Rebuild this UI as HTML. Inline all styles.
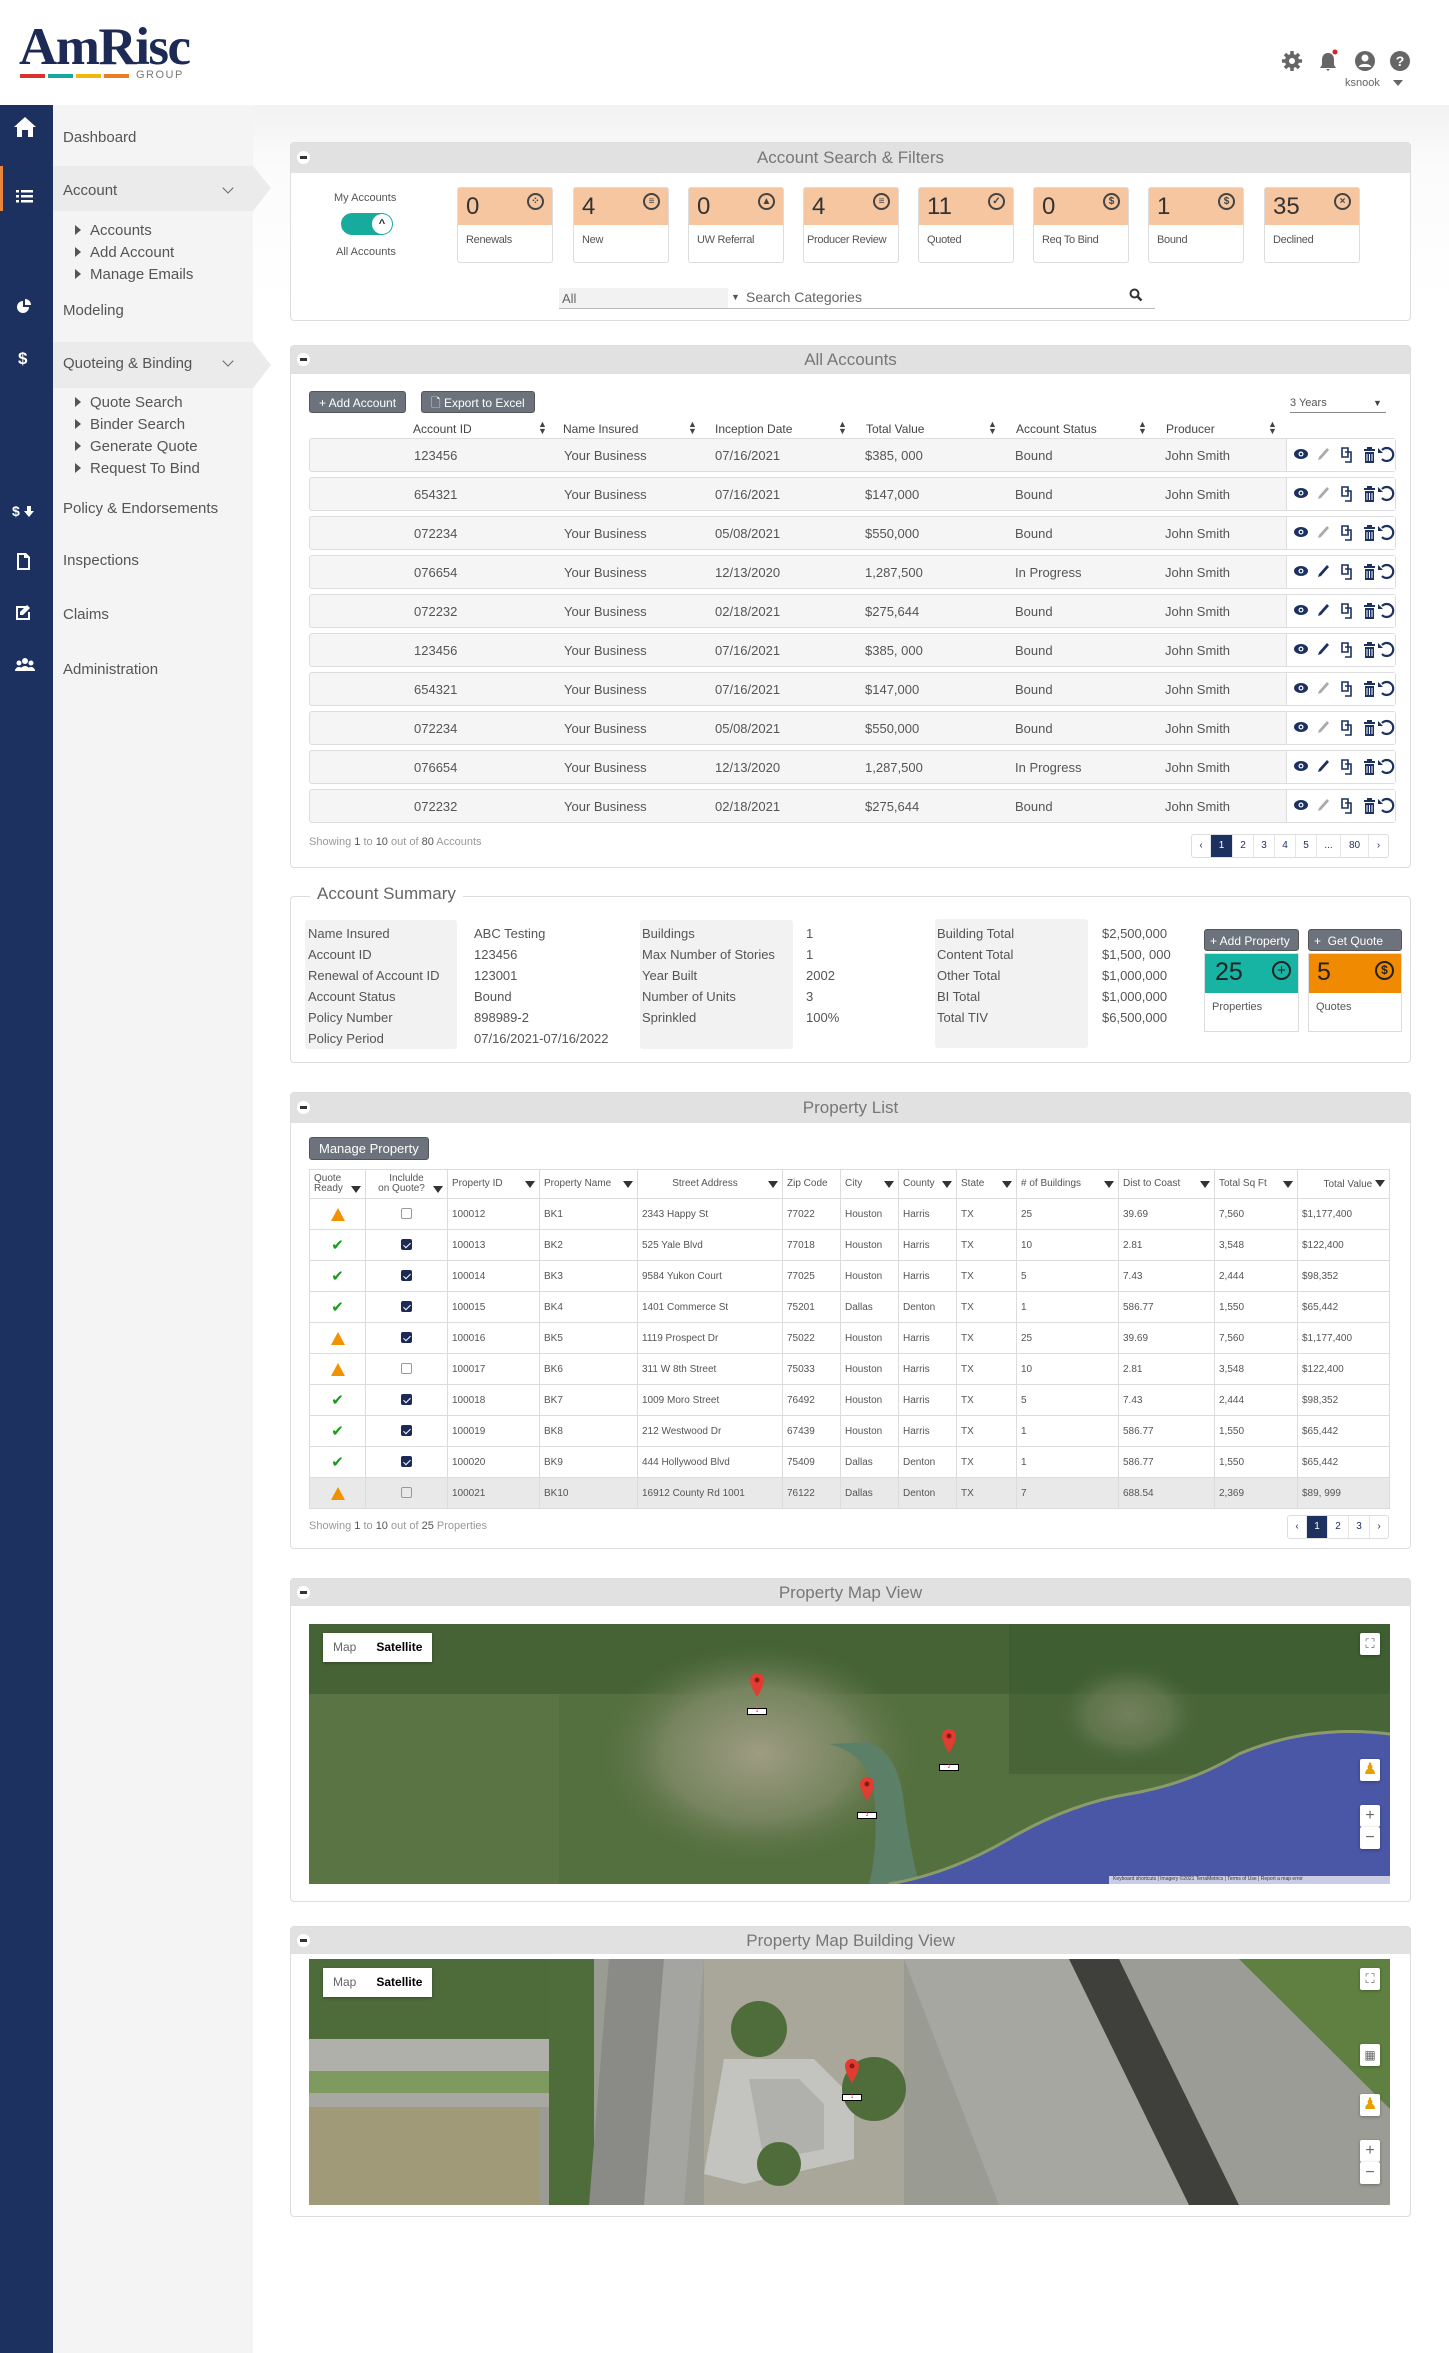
<!DOCTYPE html>
<html><head><meta charset="utf-8">
<style>
*{box-sizing:border-box;margin:0;padding:0}
body{width:1449px;height:2353px;position:relative;background:#fff;font-family:"Liberation Sans",sans-serif;color:#555;overflow:hidden}
.a{position:absolute}
.nav{position:absolute;left:63px;font-size:15px;color:#555}
.sub{position:absolute;left:75px;font-size:15px;color:#555}
.sub:before{content:"";display:inline-block;border-left:6px solid #555;border-top:5px solid transparent;border-bottom:5px solid transparent;margin-right:9px;vertical-align:0}
.panel{position:absolute;left:290px;width:1121px;border:1px solid #ddd;border-radius:4px;background:#fff}
.ph{position:absolute;left:0;top:0;width:100%;background:#e1e1e1;text-align:center;color:#777;font-size:17px}
.min{position:absolute;left:6px;width:13px;height:13px;border-radius:50%;background:#fff}
.min:after{content:"";position:absolute;left:3px;top:5px;width:7px;height:3px;background:#333}
.card{position:absolute;top:187px;width:96px;height:76px;border:1px solid #ddd;border-radius:3px;background:#fff}
.card .t{height:37px;background:#f6c6a0;position:relative}
.card .n{position:absolute;left:8px;top:5px;font-size:24px;color:#333}
.card .i{position:absolute;right:8px;top:5px;width:17px;height:17px;border:2px solid #444;border-radius:50%;font-size:10px;line-height:13px;text-align:center;color:#444;font-weight:bold}
.card .l{font-size:11px;padding:9px 0 0 8px;color:#555;white-space:nowrap;letter-spacing:-0.3px}
.btn{position:absolute;background:#6c737c;color:#fff;font-size:12px;border-radius:3px;height:22px;line-height:22px;padding:0 9px;border:1px solid #555}
.hd{position:absolute;top:422px;font-size:12px;color:#444}
.so{position:absolute;top:421px;font-size:9px;line-height:7px;color:#444}
.row{position:absolute;left:309px;width:1087px;height:34px;background:#f5f5f5;border:1px solid #ddd;border-radius:3px;font-size:13px;color:#555}
.row span{position:absolute;top:9px}
.row .ic{position:absolute;left:976px;top:0;width:109px;height:32px;background:#fff;border-left:1px solid #ddd}
.pg{position:absolute;height:24px;border:1px solid #ddd;border-radius:3px;background:#fff;font-size:10px;color:#1c3160;display:flex}
.pg div{flex:none;text-align:center;line-height:22px;border-right:1px solid #e6e6e6}
.pg .on{background:#1c3160;color:#fff}
.sl{position:absolute;font-size:13px;color:#555}
.tb{position:absolute;left:309px;top:1169px;width:1081px;border:1px solid #ccc;border-collapse:collapse;font-size:10px;color:#555}
.tb td,.tb th{border:1px solid #dcdcdc;height:31px;padding:0 4px;font-weight:normal;text-align:left;white-space:nowrap}
.tb th{height:29px;font-size:10px;line-height:10px;color:#555}
.tb th i{display:inline-block;float:right;width:0;height:0;border-left:5px solid transparent;border-right:5px solid transparent;border-top:7px solid #333;margin-top:2px;position:relative}
.cb{display:inline-block;width:11px;height:11px;border:1px solid #999;border-radius:2px;vertical-align:middle}
.cb.k{background:#1c2a55;border-color:#1c2a55;position:relative}
.cb.k:after{content:"";position:absolute;left:3px;top:1px;width:3px;height:6px;border:solid #fff;border-width:0 1.5px 1.5px 0;transform:rotate(45deg)}
.ck{color:#1a9a1a;font-size:15px;font-weight:bold}
.wn{display:inline-block;width:0;height:0;border-left:7px solid transparent;border-right:7px solid transparent;border-bottom:13px solid #f39200;position:relative;vertical-align:middle}
.mt{position:absolute;left:14px;top:9px;height:29px;background:#fff;display:flex;font-size:12px;box-shadow:0 1px 3px rgba(0,0,0,.3)}
.mt div{padding:0 10px;line-height:29px}
.mc{position:absolute;width:20px;height:22px;background:#fff;border-radius:2px;box-shadow:0 1px 3px rgba(0,0,0,.3);text-align:center;font-size:16px;line-height:22px;color:#666}
.pin{position:absolute;width:16px;height:24px}
.lb{position:absolute;width:20px;height:7px;background:#fff;border:1px solid #000;font-size:5px;line-height:5px;text-align:center;color:red}
</style></head><body>

<!-- header -->
<div class="a" style="left:0;top:0;width:1449px;height:105px;background:#fff;box-shadow:0 2px 4px rgba(0,0,0,.08)"></div>
<div class="a" style="left:19px;top:20px;font-family:'Liberation Serif',serif;font-weight:bold;font-size:53px;color:#1c2a55;letter-spacing:-1.5px;line-height:54px">AmRisc</div>
<div class="a" style="left:20px;top:74px;width:25px;height:4px;background:#d9332b"></div>
<div class="a" style="left:48px;top:74px;width:25px;height:4px;background:#17a9a0"></div>
<div class="a" style="left:76px;top:74px;width:25px;height:4px;background:#f2b70f"></div>
<div class="a" style="left:104px;top:74px;width:25px;height:4px;background:#ec7e22"></div>
<div class="a" style="left:136px;top:69px;font-size:11px;color:#777;letter-spacing:1.5px">GROUP</div>
<svg class="a" style="left:1280px;top:49px" width="130" height="24" viewBox="0 0 130 24">
<g fill="#666">
<circle cx="12" cy="12" r="7"/><g stroke="#666" stroke-width="3.5"><line x1="12" y1="2" x2="12" y2="22"/><line x1="2" y1="12" x2="22" y2="12"/><line x1="5" y1="5" x2="19" y2="19"/><line x1="19" y1="5" x2="5" y2="19"/></g><circle cx="12" cy="12" r="3" fill="#fff"/>
<path d="M48 4c4 0 6 3 6 7v5l2 3H40l2-3v-5c0-4 2-7 6-7zM46 20h4l-2 2z"/>
<circle cx="85" cy="12" r="10"/><circle cx="85" cy="9" r="3.5" fill="#fff"/><path d="M78.5 18a7 5 0 0 1 13 0z" fill="#fff"/>
<circle cx="120" cy="12" r="10"/></g>
<circle cx="55" cy="3" r="2.5" fill="#e02020"/>
<text x="120" y="17" font-size="14" font-weight="bold" fill="#fff" text-anchor="middle" font-family="Liberation Sans">?</text>
</svg>
<div class="a" style="left:1345px;top:77px;font-size:11px;color:#666">ksnook</div>
<div class="a" style="left:1393px;top:80px;border-left:5px solid transparent;border-right:5px solid transparent;border-top:6px solid #666"></div>

<!-- content bg -->
<div class="a" style="left:252px;top:105px;width:1197px;height:2248px;background:linear-gradient(#f2f2f2,#fbfbfb 60px,#fff 200px)"></div>

<!-- sidebar -->
<div class="a" style="left:0;top:105px;width:53px;height:2248px;background:#1c3160"></div>
<div class="a" style="left:53px;top:105px;width:200px;height:2248px;background:#f4f4f4"></div>
<div class="a" style="left:53px;top:166px;width:200px;height:45px;background:#ebebeb"></div>
<div class="a" style="left:253px;top:166px;border-left:18px solid #ebebeb;border-top:22px solid transparent;border-bottom:23px solid transparent"></div>
<div class="a" style="left:0;top:166px;width:3px;height:45px;background:#e9863a"></div>
<div class="a" style="left:53px;top:342px;width:200px;height:46px;background:#ebebeb"></div>
<div class="a" style="left:253px;top:342px;border-left:18px solid #ebebeb;border-top:23px solid transparent;border-bottom:23px solid transparent"></div>

<svg class="a" style="left:0;top:105px" width="53" height="590">
<g fill="#fff">
<path d="M14 22l11-10 11 10h-3v10h-5v-7h-6v7h-5V22z"/>
<rect x="16" y="85" width="3" height="2.5"/><rect x="21" y="85" width="12" height="2.5"/><rect x="16" y="90" width="3" height="2.5"/><rect x="21" y="90" width="12" height="2.5"/><rect x="16" y="95" width="3" height="2.5"/><rect x="21" y="95" width="12" height="2.5"/>
<path d="M23 196a6 6 0 1 0 6 6h-6z"/><path d="M25 194v6h6a6 6 0 0 0-6-6z"/>
<text x="18" y="259" font-size="17" font-weight="bold" font-family="Liberation Sans">$</text>
<text x="12" y="411" font-size="14" font-weight="bold" font-family="Liberation Sans">$</text><path d="M27 401h4v5h3l-5 6-5-6h3z"/>
<path d="M17 448h9l4 4v13H17zM19 450v13h9v-10h-4v-3z"/>
<path d="M16 501h10v2h-8v10h10v-6h2v8H16z"/><path d="M27 500l3 3-7 7h-3v-3z"/>
<circle cx="19" cy="558" r="2.5"/><circle cx="25" cy="556" r="3"/><circle cx="31" cy="558" r="2.5"/><path d="M15 566a4 4 0 0 1 8 0zM20 566a5 5 0 0 1 10 0zM27 566a4 4 0 0 1 8 0z"/>
</g></svg>

<div class="nav" style="top:129px">Dashboard</div>
<div class="nav" style="top:182px">Account</div>
<div class="a" style="left:224px;top:184px;width:8px;height:8px;border-right:1.5px solid #666;border-bottom:1.5px solid #666;transform:rotate(45deg)"></div>
<div class="sub" style="top:222px">Accounts</div>
<div class="sub" style="top:244px">Add Account</div>
<div class="sub" style="top:266px">Manage Emails</div>
<div class="nav" style="top:302px">Modeling</div>
<div class="nav" style="top:355px">Quoteing &amp; Binding</div>
<div class="a" style="left:224px;top:357px;width:8px;height:8px;border-right:1.5px solid #666;border-bottom:1.5px solid #666;transform:rotate(45deg)"></div>
<div class="sub" style="top:394px">Quote Search</div>
<div class="sub" style="top:416px">Binder Search</div>
<div class="sub" style="top:438px">Generate Quote</div>
<div class="sub" style="top:460px">Request To Bind</div>
<div class="nav" style="top:500px">Policy &amp; Endorsements</div>
<div class="nav" style="top:552px">Inspections</div>
<div class="nav" style="top:606px">Claims</div>
<div class="nav" style="top:661px">Administration</div>

<!-- Panel 1 -->
<div class="panel" style="top:142px;height:179px">
<div class="ph" style="height:30px;line-height:30px">Account Search &amp; Filters</div><div class="min" style="top:8px"></div>
</div>
<div class="a" style="left:334px;top:192px;font-size:11px;color:#555">My Accounts</div>
<div class="a" style="left:341px;top:213px;width:52px;height:22px;border-radius:11px;background:#17ab9d"></div>
<div class="a" style="left:372px;top:214px;width:20px;height:20px;border-radius:50%;background:#fff;font-size:11px;text-align:center;line-height:21px;color:#222;font-weight:bold">^</div>
<div class="a" style="left:336px;top:246px;font-size:11px;color:#555">All Accounts</div>

<div class="card" style="left:457px"><div class="t"><span class="n">0</span><span class="i">⁘</span></div><div class="l">Renewals</div></div>
<div class="card" style="left:573px"><div class="t"><span class="n">4</span><span class="i">≡</span></div><div class="l">New</div></div>
<div class="card" style="left:688px"><div class="t"><span class="n">0</span><span class="i">▲</span></div><div class="l">UW Referral</div></div>
<div class="card" style="left:803px"><div class="t"><span class="n">4</span><span class="i">≡</span></div><div class="l" style="padding-left:3px">Producer Review</div></div>
<div class="card" style="left:918px"><div class="t"><span class="n">11</span><span class="i">✓</span></div><div class="l">Quoted</div></div>
<div class="card" style="left:1033px"><div class="t"><span class="n">0</span><span class="i">$</span></div><div class="l">Req To Bind</div></div>
<div class="card" style="left:1148px"><div class="t"><span class="n">1</span><span class="i">$</span></div><div class="l">Bound</div></div>
<div class="card" style="left:1264px"><div class="t"><span class="n">35</span><span class="i">×</span></div><div class="l">Declined</div></div>

<div class="a" style="left:559px;top:288px;width:169px;height:21px;background:#f2f2f2;font-size:13px;line-height:21px;padding-left:3px;color:#666">All</div>
<div class="a" style="left:559px;top:308px;width:596px;height:1px;background:#bbb"></div>
<div class="a" style="left:731px;top:292px;font-size:9px;color:#555">▼</div>
<div class="a" style="left:746px;top:289px;font-size:14px;color:#666">Search Categories</div>
<svg class="a" style="left:1129px;top:288px" width="14" height="14"><circle cx="5.5" cy="5.5" r="4" fill="none" stroke="#333" stroke-width="2"/><line x1="8.5" y1="8.5" x2="12.5" y2="12.5" stroke="#333" stroke-width="2.5"/></svg>

<!-- Panel 2 -->
<div class="panel" style="top:345px;height:523px">
<div class="ph" style="height:28px;line-height:28px">All Accounts</div><div class="min" style="top:7px"></div>
</div>
<div class="btn" style="left:309px;top:391px">+ Add Account</div>
<div class="btn" style="left:421px;top:391px">🗋 Export to Excel</div>
<div class="a" style="left:1290px;top:397px;font-size:11px;color:#555">3 Years</div>
<div class="a" style="left:1373px;top:398px;font-size:9px;color:#444">▼</div>
<div class="a" style="left:1290px;top:412px;width:96px;height:1px;background:#888"></div>
<div class="hd" style="left:413px">Account ID</div><div class="so" style="left:538px">▲<br>▼</div>
<div class="hd" style="left:563px">Name Insured</div><div class="so" style="left:688px">▲<br>▼</div>
<div class="hd" style="left:715px">Inception Date</div><div class="so" style="left:838px">▲<br>▼</div>
<div class="hd" style="left:866px">Total Value</div><div class="so" style="left:988px">▲<br>▼</div>
<div class="hd" style="left:1016px">Account Status</div><div class="so" style="left:1138px">▲<br>▼</div>
<div class="hd" style="left:1166px">Producer</div><div class="so" style="left:1268px">▲<br>▼</div>

<svg width="0" height="0" style="position:absolute"><defs>
<g id="icl">
<ellipse cx="7" cy="8" rx="7" ry="5" fill="#1c3160"/><circle cx="7" cy="8" r="2.5" fill="#fff"/><circle cx="7" cy="8" r="1.3" fill="#1c3160"/>
<path d="M24 14l1-3 8-9 2 2-8 9z" fill="#aaa"/>
<path d="M48 2h6v9h-6zM51 6h6v10h-6" fill="none" stroke="#1c3160" stroke-width="1.6"/>
<path d="M70 3h11v2H70zM73 1h5v2h-5zM71 6h9v11h-9z" fill="#1c3160"/><path d="M73 8v7M75.5 8v7M78 8v7" stroke="#fff" stroke-width="1"/>
<path d="M88 4a6.5 6.5 0 1 1 0 9" fill="none" stroke="#1c3160" stroke-width="2.2"/><path d="M84 2v5h5z" fill="#1c3160"/>
</g>
<g id="icd">
<ellipse cx="7" cy="8" rx="7" ry="5" fill="#1c3160"/><circle cx="7" cy="8" r="2.5" fill="#fff"/><circle cx="7" cy="8" r="1.3" fill="#1c3160"/>
<path d="M24 14l1-3 8-9 2 2-8 9z" fill="#1c3160"/>
<path d="M48 2h6v9h-6zM51 6h6v10h-6" fill="none" stroke="#1c3160" stroke-width="1.6"/>
<path d="M70 3h11v2H70zM73 1h5v2h-5zM71 6h9v11h-9z" fill="#1c3160"/><path d="M73 8v7M75.5 8v7M78 8v7" stroke="#fff" stroke-width="1"/>
<path d="M88 4a6.5 6.5 0 1 1 0 9" fill="none" stroke="#1c3160" stroke-width="2.2"/><path d="M84 2v5h5z" fill="#1c3160"/>
</g></defs></svg>

<div class="row" style="top:438px"><span style="left:104px">123456</span><span style="left:254px">Your Business</span><span style="left:405px">07/16/2021</span><span style="left:555px">$385, 000</span><span style="left:705px">Bound</span><span style="left:855px">John Smith</span><div class="ic"><svg width="105" height="32" style="margin:7px 0 0 7px"><use href="#icl"/></svg></div></div>
<div class="row" style="top:477px"><span style="left:104px">654321</span><span style="left:254px">Your Business</span><span style="left:405px">07/16/2021</span><span style="left:555px">$147,000</span><span style="left:705px">Bound</span><span style="left:855px">John Smith</span><div class="ic"><svg width="105" height="32" style="margin:7px 0 0 7px"><use href="#icl"/></svg></div></div>
<div class="row" style="top:516px"><span style="left:104px">072234</span><span style="left:254px">Your Business</span><span style="left:405px">05/08/2021</span><span style="left:555px">$550,000</span><span style="left:705px">Bound</span><span style="left:855px">John Smith</span><div class="ic"><svg width="105" height="32" style="margin:7px 0 0 7px"><use href="#icl"/></svg></div></div>
<div class="row" style="top:555px"><span style="left:104px">076654</span><span style="left:254px">Your Business</span><span style="left:405px">12/13/2020</span><span style="left:555px">1,287,500</span><span style="left:705px">In Progress</span><span style="left:855px">John Smith</span><div class="ic"><svg width="105" height="32" style="margin:7px 0 0 7px"><use href="#icd"/></svg></div></div>
<div class="row" style="top:594px"><span style="left:104px">072232</span><span style="left:254px">Your Business</span><span style="left:405px">02/18/2021</span><span style="left:555px">$275,644</span><span style="left:705px">Bound</span><span style="left:855px">John Smith</span><div class="ic"><svg width="105" height="32" style="margin:7px 0 0 7px"><use href="#icd"/></svg></div></div>
<div class="row" style="top:633px"><span style="left:104px">123456</span><span style="left:254px">Your Business</span><span style="left:405px">07/16/2021</span><span style="left:555px">$385, 000</span><span style="left:705px">Bound</span><span style="left:855px">John Smith</span><div class="ic"><svg width="105" height="32" style="margin:7px 0 0 7px"><use href="#icd"/></svg></div></div>
<div class="row" style="top:672px"><span style="left:104px">654321</span><span style="left:254px">Your Business</span><span style="left:405px">07/16/2021</span><span style="left:555px">$147,000</span><span style="left:705px">Bound</span><span style="left:855px">John Smith</span><div class="ic"><svg width="105" height="32" style="margin:7px 0 0 7px"><use href="#icl"/></svg></div></div>
<div class="row" style="top:711px"><span style="left:104px">072234</span><span style="left:254px">Your Business</span><span style="left:405px">05/08/2021</span><span style="left:555px">$550,000</span><span style="left:705px">Bound</span><span style="left:855px">John Smith</span><div class="ic"><svg width="105" height="32" style="margin:7px 0 0 7px"><use href="#icl"/></svg></div></div>
<div class="row" style="top:750px"><span style="left:104px">076654</span><span style="left:254px">Your Business</span><span style="left:405px">12/13/2020</span><span style="left:555px">1,287,500</span><span style="left:705px">In Progress</span><span style="left:855px">John Smith</span><div class="ic"><svg width="105" height="32" style="margin:7px 0 0 7px"><use href="#icd"/></svg></div></div>
<div class="row" style="top:789px"><span style="left:104px">072232</span><span style="left:254px">Your Business</span><span style="left:405px">02/18/2021</span><span style="left:555px">$275,644</span><span style="left:705px">Bound</span><span style="left:855px">John Smith</span><div class="ic"><svg width="105" height="32" style="margin:7px 0 0 7px"><use href="#icl"/></svg></div></div>
<div class="a" style="left:309px;top:836px;font-size:11px;color:#999">Showing <span style="color:#555">1</span> to <span style="color:#555">10</span> out of <span style="color:#555">80</span> Accounts</div>
<div class="pg" style="left:1191px;top:834px;width:198px"><div style="width:19px">‹</div><div class="on" style="width:22px">1</div><div style="width:21px">2</div><div style="width:21px">3</div><div style="width:21px">4</div><div style="width:21px">5</div><div style="width:24px">...</div><div style="width:28px">80</div><div style="width:19px;border:0">›</div></div>

<!-- Account summary -->
<div class="a" style="left:290px;top:896px;width:1121px;height:167px;border:1px solid #ddd;border-radius:4px"></div>
<div class="a" style="left:310px;top:884px;background:#fff;padding:0 7px;font-size:17px;color:#666">Account Summary</div>
<div class="a" style="left:305px;top:920px;width:152px;height:129px;background:#f2f2f2;border-radius:3px"></div>
<div class="a" style="left:640px;top:920px;width:153px;height:129px;background:#f2f2f2;border-radius:3px"></div>
<div class="a" style="left:935px;top:919px;width:153px;height:129px;background:#f2f2f2;border-radius:3px"></div>
<div class="sl" style="left:308px;top:923px;line-height:21px">Name Insured<br>Account ID<br>Renewal of Account ID<br>Account Status<br>Policy Number<br>Policy Period</div>
<div class="sl" style="left:474px;top:923px;line-height:21px">ABC Testing<br>123456<br>123001<br>Bound<br>898989-2<br>07/16/2021-07/16/2022</div>
<div class="sl" style="left:642px;top:923px;line-height:21px">Buildings<br>Max Number of Stories<br>Year Built<br>Number of Units<br>Sprinkled</div>
<div class="sl" style="left:806px;top:923px;line-height:21px">1<br>1<br>2002<br>3<br>100%</div>
<div class="sl" style="left:937px;top:923px;line-height:21px">Building Total<br>Content Total<br>Other Total<br>BI Total<br>Total TIV</div>
<div class="sl" style="left:1102px;top:923px;line-height:21px">$2,500,000<br>$1,500, 000<br>$1,000,000<br>$1,000,000<br>$6,500,000</div>
<div class="btn" style="left:1204px;top:929px;width:95px;padding:0 5px;font-size:12px">+ Add Property</div>
<div class="btn" style="left:1308px;top:929px;width:94px;padding:0 5px;font-size:12px">+&nbsp; Get Quote</div>
<div class="a" style="left:1204px;top:953px;width:95px;height:79px;border:1px solid #ddd;background:#fff"><div style="height:39px;background:#17b3a3;position:relative"><span style="position:absolute;left:10px;top:4px;font-size:25px;color:#222">25</span><span style="position:absolute;right:7px;top:7px;width:19px;height:19px;border:2px solid #222;border-radius:50%;text-align:center;line-height:15px;font-size:15px;color:#222">+</span></div><div style="font-size:11px;padding:8px 0 0 7px">Properties</div></div>
<div class="a" style="left:1308px;top:953px;width:94px;height:79px;border:1px solid #ddd;background:#fff"><div style="height:39px;background:#f08a00;position:relative"><span style="position:absolute;left:8px;top:4px;font-size:25px;color:#222">5</span><span style="position:absolute;right:7px;top:7px;width:19px;height:19px;border:2px solid #222;border-radius:50%;text-align:center;line-height:15px;font-size:12px;font-weight:bold;color:#222">$</span></div><div style="font-size:11px;padding:8px 0 0 7px">Quotes</div></div>

<!-- Property list -->
<div class="panel" style="top:1092px;height:457px">
<div class="ph" style="height:30px;line-height:30px">Property List</div><div class="min" style="top:8px"></div>
</div>
<div class="btn" style="left:309px;top:1137px;font-size:13px;height:23px">Manage Property</div>
<table class="tb">
<tr><th style="width:56px">Quote<br>Ready<i></i></th><th style="width:82px;text-align:center">Inclulde<br>on Quote?<i></i></th><th style="width:92px">Property ID<i></i></th><th style="width:98px">Property Name<i></i></th><th style="width:145px;text-align:center">Street Address<i></i></th><th style="width:58px">Zip Code</th><th style="width:58px">City<i></i></th><th style="width:58px">County<i></i></th><th style="width:60px">State<i></i></th><th style="width:102px">#  of Buildings<i></i></th><th style="width:96px">Dist to Coast<i></i></th><th style="width:83px">Total Sq Ft<i></i></th><th style="text-align:right">Total Value <i style="float:none"></i></th></tr>
<tr><td style="text-align:center"><span class="wn"></span></td><td style="text-align:center"><span class="cb"></span></td><td>100012</td><td>BK1</td><td>2343 Happy St</td><td>77022</td><td>Houston</td><td>Harris</td><td>TX</td><td>25</td><td>39.69</td><td>7,560</td><td>$1,177,400</td></tr>
<tr><td style="text-align:center" class="ck">✔</td><td style="text-align:center"><span class="cb k"></span></td><td>100013</td><td>BK2</td><td>525 Yale Blvd</td><td>77018</td><td>Houston</td><td>Harris</td><td>TX</td><td>10</td><td>2.81</td><td>3,548</td><td>$122,400</td></tr>
<tr><td style="text-align:center" class="ck">✔</td><td style="text-align:center"><span class="cb k"></span></td><td>100014</td><td>BK3</td><td>9584 Yukon Court</td><td>77025</td><td>Houston</td><td>Harris</td><td>TX</td><td>5</td><td>7.43</td><td>2,444</td><td>$98,352</td></tr>
<tr><td style="text-align:center" class="ck">✔</td><td style="text-align:center"><span class="cb k"></span></td><td>100015</td><td>BK4</td><td>1401 Commerce St</td><td>75201</td><td>Dallas</td><td>Denton</td><td>TX</td><td>1</td><td>586.77</td><td>1,550</td><td>$65,442</td></tr>
<tr><td style="text-align:center"><span class="wn"></span></td><td style="text-align:center"><span class="cb k"></span></td><td>100016</td><td>BK5</td><td>1119 Prospect Dr</td><td>75022</td><td>Houston</td><td>Harris</td><td>TX</td><td>25</td><td>39.69</td><td>7,560</td><td>$1,177,400</td></tr>
<tr><td style="text-align:center"><span class="wn"></span></td><td style="text-align:center"><span class="cb"></span></td><td>100017</td><td>BK6</td><td>311 W 8th Street</td><td>75033</td><td>Houston</td><td>Harris</td><td>TX</td><td>10</td><td>2.81</td><td>3,548</td><td>$122,400</td></tr>
<tr><td style="text-align:center" class="ck">✔</td><td style="text-align:center"><span class="cb k"></span></td><td>100018</td><td>BK7</td><td>1009 Moro Street</td><td>76492</td><td>Houston</td><td>Harris</td><td>TX</td><td>5</td><td>7.43</td><td>2,444</td><td>$98,352</td></tr>
<tr><td style="text-align:center" class="ck">✔</td><td style="text-align:center"><span class="cb k"></span></td><td>100019</td><td>BK8</td><td>212 Westwood Dr</td><td>67439</td><td>Houston</td><td>Harris</td><td>TX</td><td>1</td><td>586.77</td><td>1,550</td><td>$65,442</td></tr>
<tr><td style="text-align:center" class="ck">✔</td><td style="text-align:center"><span class="cb k"></span></td><td>100020</td><td>BK9</td><td>444 Hollywood Blvd</td><td>75409</td><td>Dallas</td><td>Denton</td><td>TX</td><td>1</td><td>586.77</td><td>1,550</td><td>$65,442</td></tr>
<tr style="background:#e9e9e9"><td style="text-align:center"><span class="wn"></span></td><td style="text-align:center"><span class="cb"></span></td><td>100021</td><td>BK10</td><td>16912 County Rd 1001</td><td>76122</td><td>Dallas</td><td>Denton</td><td>TX</td><td>7</td><td>688.54</td><td>2,369</td><td>$89, 999</td></tr>
</table>
<div class="a" style="left:309px;top:1520px;font-size:11px;color:#999">Showing <span style="color:#555">1</span> to <span style="color:#555">10</span> out of <span style="color:#555">25</span> Properties</div>
<div class="pg" style="left:1287px;top:1515px;width:102px"><div style="width:19px">‹</div><div class="on" style="width:21px">1</div><div style="width:21px">2</div><div style="width:21px">3</div><div style="width:18px;border:0">›</div></div>

<!-- Map view -->
<div class="panel" style="top:1578px;height:324px">
<div class="ph" style="height:27px;line-height:27px">Property Map View</div><div class="min" style="top:7px"></div>
</div>
<div class="a" style="left:309px;top:1624px;width:1081px;height:260px;overflow:hidden;background:#4d6a3c">
<svg width="1081" height="260" style="position:absolute;left:0;top:0">
<defs><radialGradient id="city" cx="0.5" cy="0.5" r="0.5"><stop offset="0" stop-color="#9e9c82"/><stop offset="0.6" stop-color="#76845f"/><stop offset="1" stop-color="#5a7244" stop-opacity="0"/></radialGradient></defs>
<rect width="1081" height="260" fill="#55703f"/>
<rect width="1081" height="70" fill="#3f5e31" opacity=".7"/>
<rect x="700" width="381" height="150" fill="#3a5a30" opacity=".5"/>
<rect y="70" width="250" height="190" fill="#5f7a47" opacity=".5"/>
<ellipse cx="450" cy="130" rx="160" ry="110" fill="url(#city)"/>
<ellipse cx="820" cy="90" rx="70" ry="50" fill="url(#city)" opacity=".5"/>
<path d="M520 120 Q560 130 565 170 Q570 220 560 260 L610 260 Q600 220 595 180 Q590 130 560 118z" fill="#5c7f68"/>
<path d="M580 260 Q640 250 700 215 Q760 180 820 170 Q880 160 930 130 Q1000 100 1081 110 L1081 260z" fill="#4a56a6"/>
<path d="M580 260 Q640 250 700 215 Q760 180 820 170 Q880 160 930 130 Q1000 100 1081 110" fill="none" stroke="#8b9a6a" stroke-width="3"/>
</svg>
<div class="mt"><div style="color:#666">Map</div><div style="color:#000;font-weight:bold">Satellite</div></div>
<div class="mc" style="left:1051px;top:9px;font-size:13px">⛶</div>
<div class="mc" style="left:1051px;top:135px;color:#e6a000">♟</div>
<div class="mc" style="left:1051px;top:181px">+</div>
<div class="mc" style="left:1051px;top:203px">−</div>
<svg class="pin" style="left:440px;top:49px"><path d="M8 0a7 7 0 0 1 7 7c0 6-7 17-7 17S1 13 1 7a7 7 0 0 1 7-7z" fill="#e03c31"/><circle cx="8" cy="7" r="2.5" fill="#8b1a12"/></svg>
<div class="lb" style="left:438px;top:84px">1</div>
<svg class="pin" style="left:632px;top:105px"><path d="M8 0a7 7 0 0 1 7 7c0 6-7 17-7 17S1 13 1 7a7 7 0 0 1 7-7z" fill="#e03c31"/><circle cx="8" cy="7" r="2.5" fill="#8b1a12"/></svg>
<div class="lb" style="left:630px;top:140px">2</div>
<svg class="pin" style="left:550px;top:153px"><path d="M8 0a7 7 0 0 1 7 7c0 6-7 17-7 17S1 13 1 7a7 7 0 0 1 7-7z" fill="#e03c31"/><circle cx="8" cy="7" r="2.5" fill="#8b1a12"/></svg>
<div class="lb" style="left:548px;top:188px">3</div>
<div class="a" style="left:800px;top:252px;width:281px;height:8px;background:rgba(255,255,255,.7);font-size:5px;color:#333;padding-left:4px">Keyboard shortcuts | Imagery ©2021 TerraMetrics | Terms of Use | Report a map error</div>
</div>

<!-- Building view -->
<div class="panel" style="top:1926px;height:291px">
<div class="ph" style="height:27px;line-height:27px">Property Map Building View</div><div class="min" style="top:7px"></div>
</div>
<div class="a" style="left:309px;top:1959px;width:1081px;height:246px;overflow:hidden;background:#8d9186">
<svg width="1081" height="246" style="position:absolute;left:0;top:0">
<rect width="1081" height="246" fill="#9a9b92"/>
<rect width="260" height="80" fill="#4e6b3a"/>
<rect y="80" width="240" height="32" fill="#b0b0aa"/>
<rect y="112" width="240" height="22" fill="#7f9a5e"/>
<rect y="134" width="240" height="14" fill="#a8a8a2"/>
<rect y="148" width="230" height="98" fill="#a09a78"/>
<rect x="240" width="45" height="246" fill="#4f6d3a"/>
<path d="M300 0 L355 0 L335 246 L280 246z" fill="#8a8a86"/>
<path d="M355 0 L395 0 L375 246 L335 246z" fill="#a4a4a0"/>
<rect x="395" width="200" height="246" fill="#a9a69a"/>
<path d="M415 100h90l40 40v60l-110 25-40-10z" fill="#c3c3c0"/>
<path d="M440 120h50l25 25v45l-60 12z" fill="#b0b0ac"/>
<circle cx="450" cy="70" r="28" fill="#4f6d3a"/><circle cx="565" cy="130" r="32" fill="#4f6d3a"/><circle cx="470" cy="205" r="22" fill="#4f6d3a"/>
<path d="M595 0 L760 0 L880 246 L690 246z" fill="#a7a7a2"/>
<path d="M760 0 L810 0 L930 246 L880 246z" fill="#3f3f3c"/>
<path d="M810 0 L1081 0 L1081 246 L930 246z" fill="#9c9c96"/>
<path d="M930 0 L1081 0 L1081 150z" fill="#5f8040"/>
</svg>
<svg class="pin" style="left:535px;top:100px"><path d="M8 0a7 7 0 0 1 7 7c0 6-7 17-7 17S1 13 1 7a7 7 0 0 1 7-7z" fill="#e03c31"/><circle cx="8" cy="7" r="2.5" fill="#8b1a12"/></svg>
<div class="lb" style="left:533px;top:135px">1</div>
<div class="mt"><div style="color:#666">Map</div><div style="color:#000;font-weight:bold">Satellite</div></div>
<div class="mc" style="left:1051px;top:9px;font-size:13px">⛶</div>
<div class="mc" style="left:1051px;top:85px;font-size:12px">▦</div>
<div class="mc" style="left:1051px;top:135px;color:#e6a000">♟</div>
<div class="mc" style="left:1051px;top:181px">+</div>
<div class="mc" style="left:1051px;top:203px">−</div>
</div>

</body></html>
